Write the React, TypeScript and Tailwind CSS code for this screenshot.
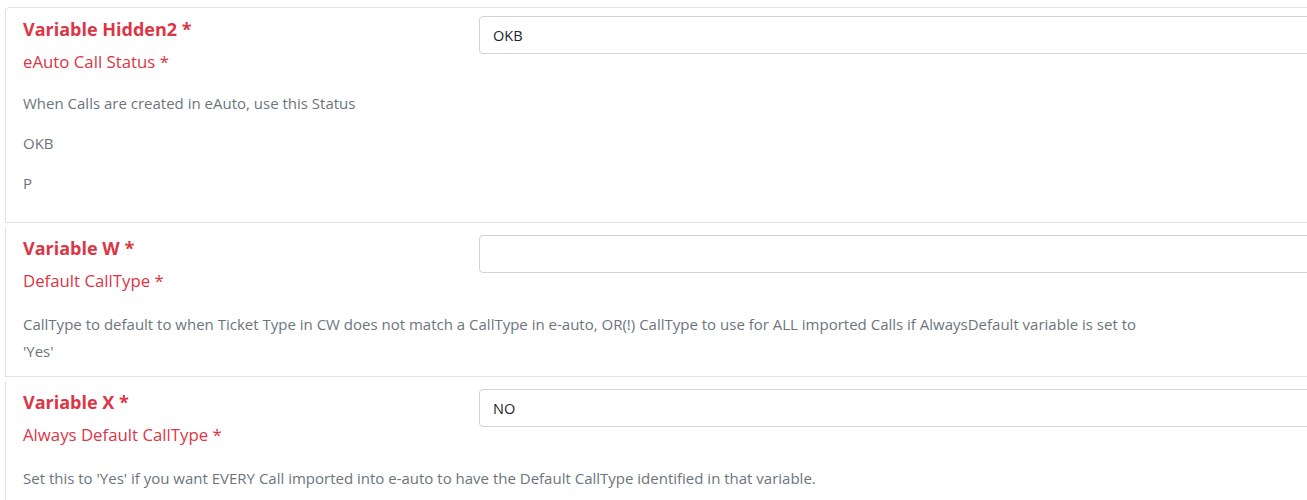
const font = { fontFamily: '"Open Sans", "Noto Sans", sans-serif' };

interface SettingCardProps {
  name: string;
  label: string;
  value: string;
  first?: boolean;
  children: React.ReactNode;
}

function SettingCard({ name, label, value, first = false, children }: SettingCardProps) {
  return (
    <div
      className={
        first
          ? 'rounded-t-[4px] border border-[#dee2e6] bg-white pl-[17px]'
          : 'mt-[4px] border border-t-0 border-[#dee2e6] bg-white pl-[17px]'
      }
    >
      <div className="flex">
        <div className="w-[456px] shrink-0 pt-[7px]">
          <h3 className="text-[18px] font-bold leading-[28px] text-[#dc3545]">{name}</h3>
          <div className="mt-[6px] text-[16.8px] leading-[26px] text-[#dc3545]">{label}</div>
        </div>
        <div className="flex-1 pt-[8px]">
          <input
            className="h-[38px] w-full rounded-[4px] border border-[#ced4da] bg-white px-[13px] text-[14.5px] text-[#212529] outline-none"
            defaultValue={value}
            readOnly
          />
        </div>
      </div>
      {children}
    </div>
  );
}

export default function App() {
  return (
    <div className="h-[500px] w-full overflow-hidden bg-white" style={font}>
      <div className="ml-[5px] w-[1330px] pt-[7px]">
        <SettingCard name="Variable Hidden2 *" label="eAuto Call Status *" value="OKB" first>
          <div className="pt-[15px] pb-[25px] text-[15px] leading-[27px] text-[#6c757d]">
            <p className="mb-[13px]">When Calls are created in eAuto, use this Status</p>
            <p className="mb-[13px]">OKB</p>
            <p>P</p>
          </div>
        </SettingCard>
        <SettingCard name="Variable W *" label="Default CallType *" value="">
          <div className="max-w-[1135px] pt-[17px] pb-[11px] text-[15px] leading-[27px] text-[#6c757d]">
            <p>
              CallType to default to when Ticket Type in CW does not match a CallType in e-auto, OR(!) CallType to
              use for ALL imported Calls if AlwaysDefault variable is set to 'Yes'
            </p>
          </div>
        </SettingCard>
        <SettingCard name="Variable X *" label="Always Default CallType *" value="NO">
          <div className="pt-[17px] pb-[11px] text-[15px] leading-[27px] text-[#6c757d]">
            <p>
              Set this to 'Yes' if you want EVERY Call imported into e-auto to have the Default CallType identified in
              that variable.
            </p>
          </div>
        </SettingCard>
      </div>
    </div>
  );
}
